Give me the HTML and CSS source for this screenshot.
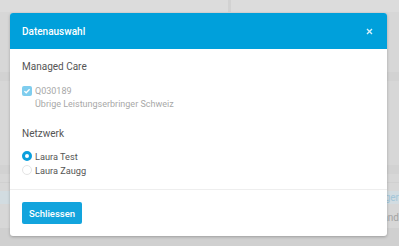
FILE: index.html
```html
<!DOCTYPE html>
<html lang="de">
<head>
    <meta charset="UTF-8">
    <meta name="viewport" content="width=device-width, initial-scale=1.0">
    <title>Datenauswahl</title>
    <link rel="stylesheet" href="styles.css">
</head>
<body>
    <!-- Seite im Hintergrund -->
    <div class="page">
        <div class="topbar">
            <div class="topbar-left"></div>
            <div class="topbar-right"></div>
        </div>
        <div class="page-body">
            <div class="spacer" style="height: 60px"></div>
            <div class="band"></div>
            <div class="spacer" style="height: 84px"></div>
            <div class="band"></div>
            <div class="spacer line" style="height: 8px"></div>
            <div class="spacer" style="height: 8px"></div>
            <div class="row-link">Leistungserbringer</div>
            <div class="row-text">Verband</div>
            <div class="page-foot"></div>
        </div>
    </div>

    <!-- Dialog -->
    <div class="overlay">
        <div class="modal">
            <div class="modal-header">
                <span class="modal-title">Datenauswahl</span>
                <svg class="modal-close" width="7" height="7" viewBox="0 0 7 7"><path d="M1 1 L6 6 M6 1 L1 6" stroke="#fff" stroke-width="1.4" opacity="0.85"/></svg>
            </div>
            <div class="modal-body">
                <div class="section-title">Managed Care</div>
                <label class="check-item">
                    <span class="checkbox">
                        <svg width="8" height="8" viewBox="0 0 8 8"><path d="M1.4 4.1 L3.2 5.8 L6.6 2.2" fill="none" stroke="#fff" stroke-width="1.3"/></svg>
                    </span>
                    <span class="check-text">
                        <span>Q030189</span>
                        <span>Übrige Leistungserbringer Schweiz</span>
                    </span>
                </label>

                <div class="section-title net">Netzwerk</div>
                <label class="radio-item">
                    <span class="radio checked"></span>
                    <span>Laura Test</span>
                </label>
                <label class="radio-item">
                    <span class="radio"></span>
                    <span>Laura Zaugg</span>
                </label>
            </div>
            <div class="modal-footer">
                <button class="btn-primary">Schliessen</button>
            </div>
        </div>
    </div>
</body>
</html>
```

FILE: styles.css
```css
html, body {
    margin: 0;
    padding: 0;
    width: 399px;
    height: 246px;
    overflow: hidden;
    font-family: Roboto, "Liberation Sans", sans-serif;
    background: #d7d7d7;
}

/* Hintergrund */
.page {
    display: flex;
    flex-direction: column;
    height: 100%;
}
.topbar {
    display: flex;
    height: 12px;
    gap: 3px;
    background: #d2d2d2;
}
.topbar-left {
    width: 228px;
    background: #dcdcdc;
}
.topbar-right {
    flex: 1;
    background: #dcdcdc;
}
.page-body {
    flex: 1;
    display: flex;
    flex-direction: column;
}
.band {
    height: 9px;
    background: #d2d2d2;
}
.spacer.line {
    border-bottom: 1px solid #d0d0d0;
}
.row-link {
    height: 13px;
    line-height: 13px;
    font-size: 10px;
    color: #a3c6d9;
    background: #d2dce1;
    text-align: right;
    white-space: nowrap;
}
.row-text {
    height: 20px;
    line-height: 20px;
    margin-top: 4px;
    font-size: 10px;
    color: #a3a3a3;
    text-align: right;
    white-space: nowrap;
}
.page-foot {
    flex: 1;
    background: #d0d0d0;
}

/* Dialog */
.overlay {
    position: absolute;
    left: 0;
    top: 0;
    width: 399px;
    height: 246px;
}
.modal {
    position: absolute;
    left: 10px;
    top: 13px;
    width: 377px;
    height: 223px;
    background: #fff;
    border-radius: 3px;
    box-shadow: 0 1px 3px rgba(0, 0, 0, 0.25);
    display: flex;
    flex-direction: column;
    overflow: hidden;
}
.modal-header {
    height: 36px;
    background: #00a0db;
    display: flex;
    align-items: center;
    justify-content: space-between;
    padding: 0 12px;
    color: #fff;
}
.modal-title {
    font-size: 10px;
    font-weight: 500;
}
.modal-close {
    margin-right: 2px;
}
.modal-body {
    padding: 12px 12px 0;
    flex: 1;
    border-bottom: 1px solid #eeeeee;
}
.section-title {
    font-size: 10px;
    color: #555;
    margin-bottom: 13px;
}
.section-title.net {
    margin-top: 17px;
    margin-bottom: 10px;
}
.check-item {
    display: flex;
    align-items: flex-start;
    gap: 3px;
}
.checkbox {
    width: 10px;
    height: 10px;
    border-radius: 2px;
    background: #7fcdee;
    display: flex;
    align-items: center;
    justify-content: center;
    margin-top: 1px;
}
.check-text {
    display: flex;
    flex-direction: column;
    font-size: 9px;
    color: #a8a8a8;
    line-height: 13px;
}
.radio-item {
    display: flex;
    align-items: center;
    gap: 3px;
    font-size: 9.2px;
    color: #555;
    height: 14px;
}
.radio {
    box-sizing: border-box;
    width: 10px;
    height: 10px;
    border-radius: 50%;
    border: 1px solid #e4e4e4;
    background: #fff;
}
.radio.checked {
    border: 3px solid #0a9fdc;
}
.modal-footer {
    height: 46px;
    display: flex;
    align-items: center;
    padding: 0 12px;
}
.btn-primary {
    height: 22px;
    padding: 0 7px;
    border: none;
    border-radius: 2px;
    background: #12a4dd;
    color: #fff;
    font-family: Roboto, "Liberation Sans", sans-serif;
    font-size: 9.5px;
    font-weight: 500;
}
```
